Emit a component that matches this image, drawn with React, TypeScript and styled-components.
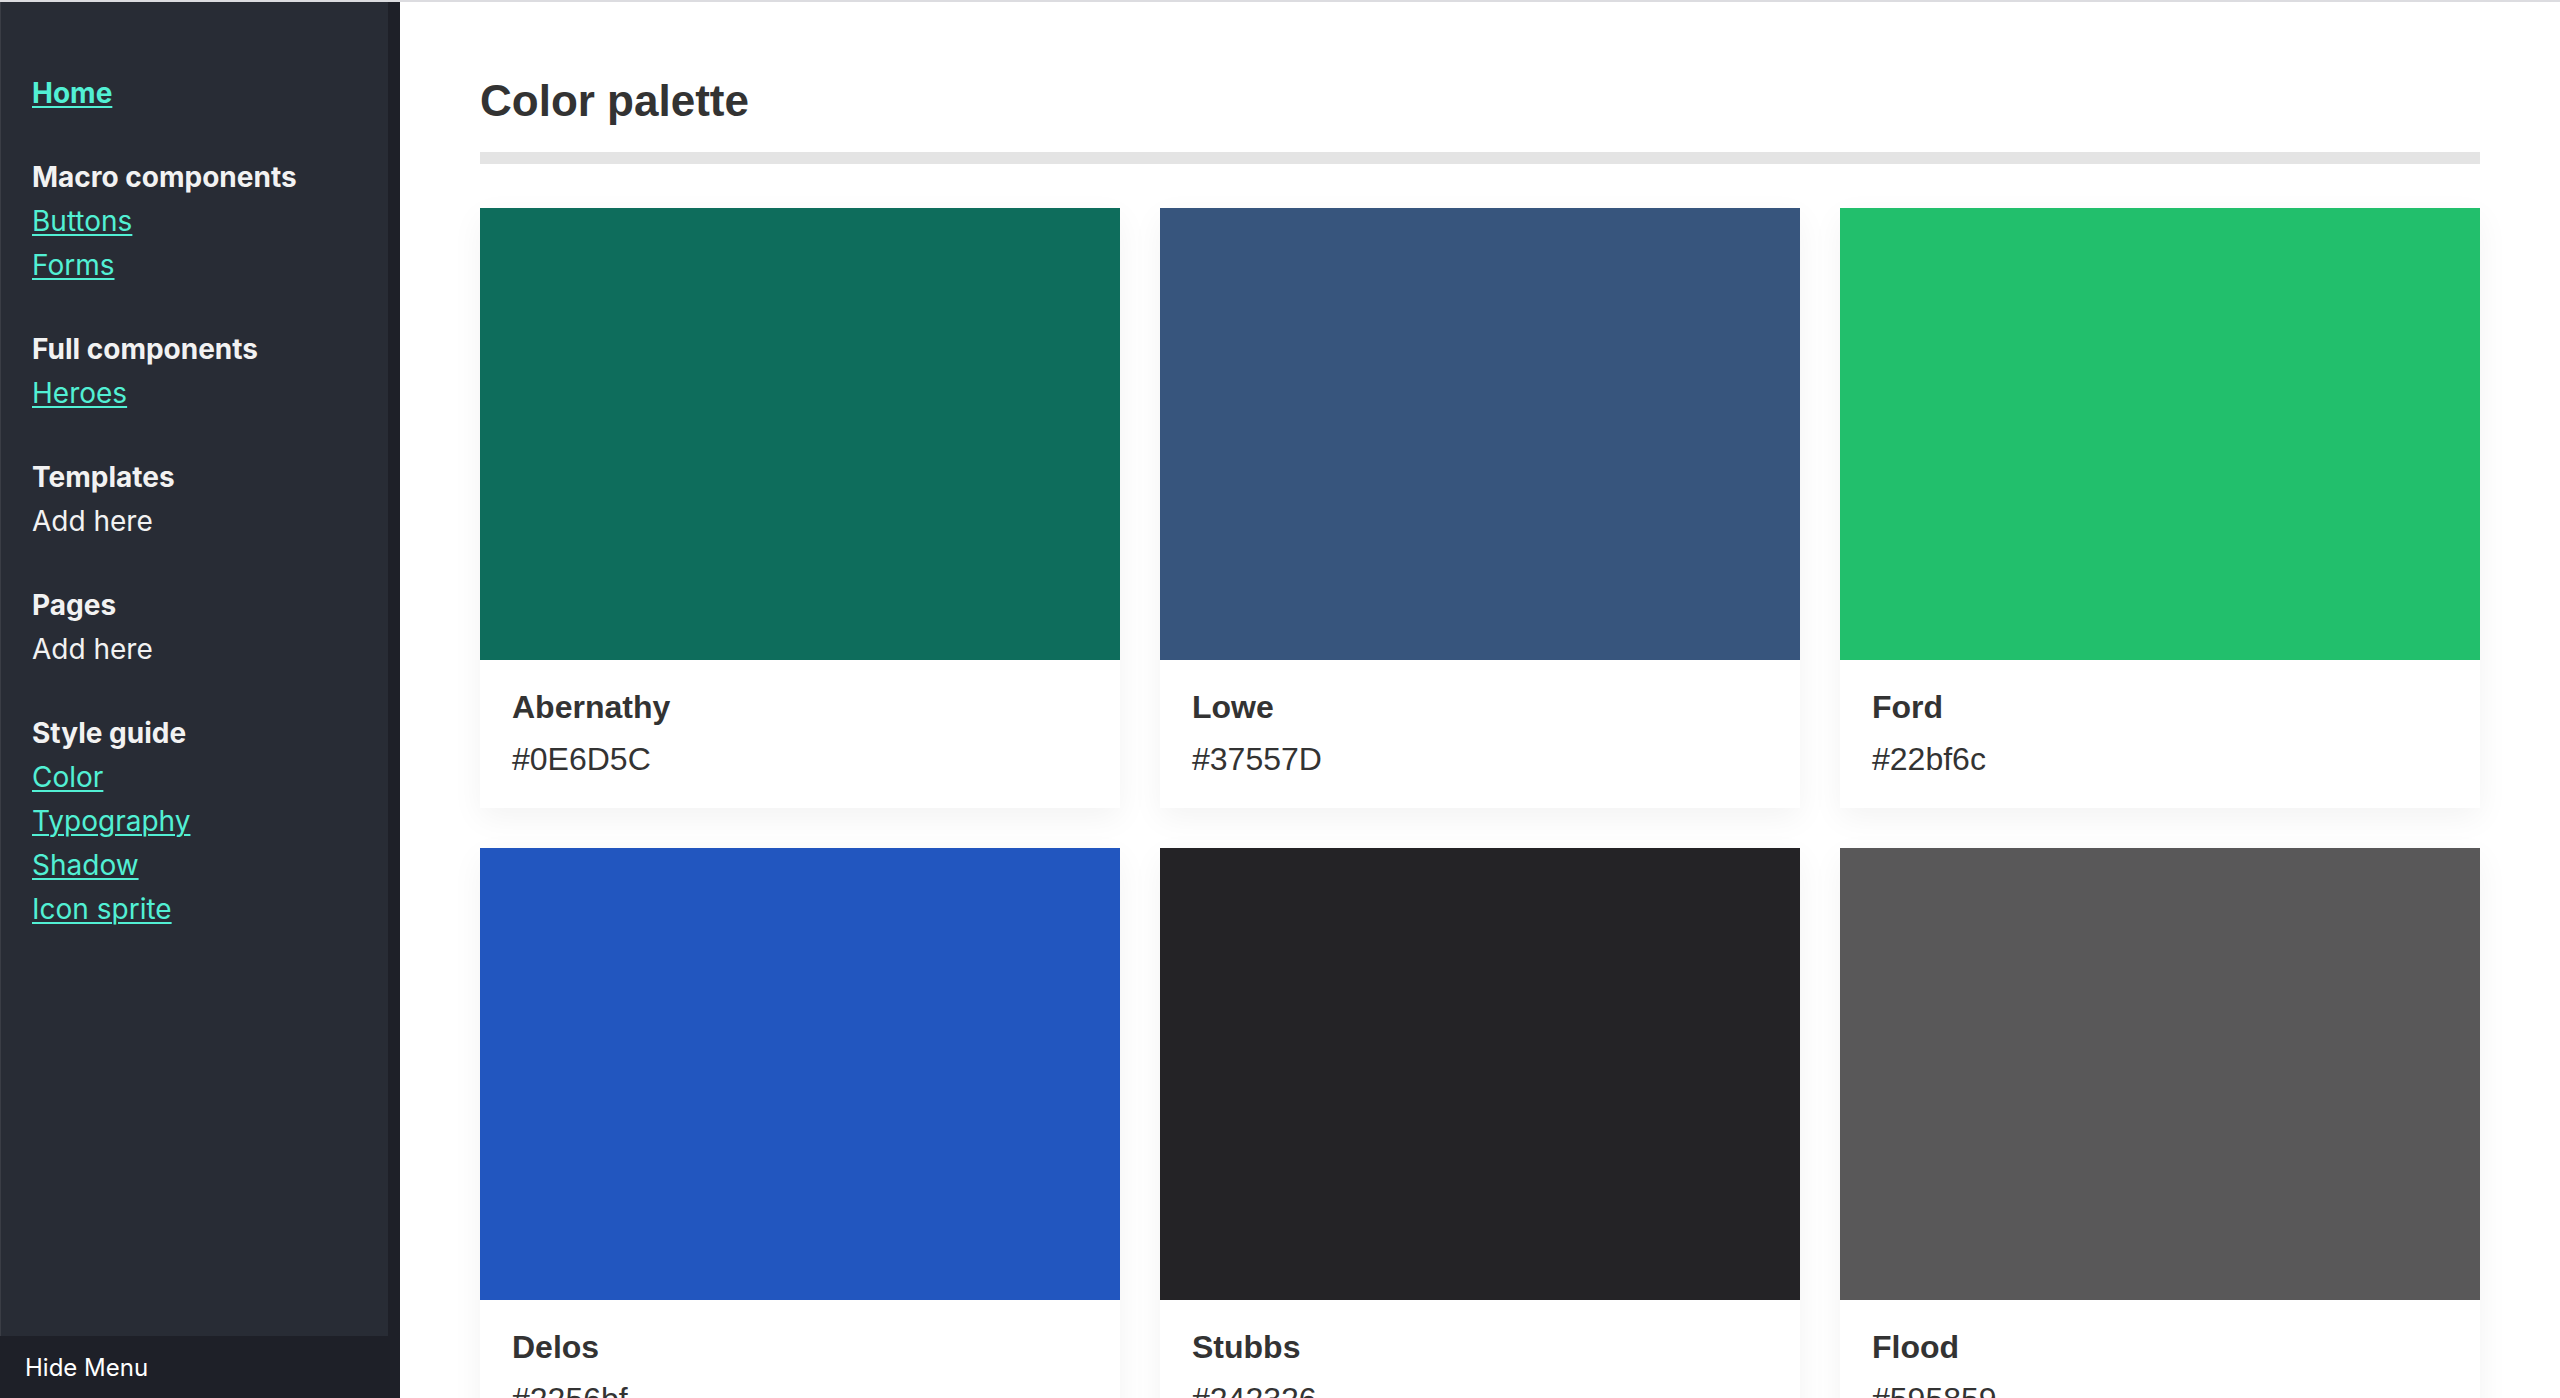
import styled, { createGlobalStyle } from 'styled-components'

const GlobalStyle = createGlobalStyle`
  html, body {
    margin: 0;
    padding: 0;
    background: #ffffff;
  }
  * {
    box-sizing: border-box;
  }
`

interface Swatch {
  name: string
  hex: string
}

const swatches: Swatch[] = [
  { name: 'Abernathy', hex: '#0E6D5C' },
  { name: 'Lowe', hex: '#37557D' },
  { name: 'Ford', hex: '#22bf6c' },
  { name: 'Delos', hex: '#2256bf' },
  { name: 'Stubbs', hex: '#242326' },
  { name: 'Flood', hex: '#595859' },
]

interface NavSection {
  title?: string
  links: { label: string; active?: boolean; placeholder?: boolean }[]
}

const sections: NavSection[] = [
  { links: [{ label: 'Home', active: true }] },
  {
    title: 'Macro components',
    links: [{ label: 'Buttons' }, { label: 'Forms' }],
  },
  { title: 'Full components', links: [{ label: 'Heroes' }] },
  { title: 'Templates', links: [{ label: 'Add here', placeholder: true }] },
  { title: 'Pages', links: [{ label: 'Add here', placeholder: true }] },
  {
    title: 'Style guide',
    links: [
      { label: 'Color' },
      { label: 'Typography' },
      { label: 'Shadow' },
      { label: 'Icon sprite' },
    ],
  },
]

export default function App() {
  return (
    <>
      <GlobalStyle />
      <Layout>
        <Sidebar>
          <Nav>
            {sections.map((section, i) => (
              <Section key={i}>
                {section.title && <SectionTitle>{section.title}</SectionTitle>}
                {section.links.map((link) =>
                  link.placeholder ? (
                    <Placeholder key={link.label}>{link.label}</Placeholder>
                  ) : (
                    <NavLink key={link.label} href="#" $active={link.active}>
                      {link.label}
                    </NavLink>
                  )
                )}
              </Section>
            ))}
          </Nav>
          <HideMenu>Hide Menu</HideMenu>
        </Sidebar>
        <Main>
          <Title>Color palette</Title>
          <Rule />
          <Grid>
            {swatches.map((swatch) => (
              <Card key={swatch.name}>
                <ColorBlock $color={swatch.hex} />
                <CardBody>
                  <SwatchName>{swatch.name}</SwatchName>
                  <SwatchHex>{swatch.hex}</SwatchHex>
                </CardBody>
              </Card>
            ))}
          </Grid>
        </Main>
      </Layout>
    </>
  )
}

const Layout = styled.div`
  display: grid;
  grid-template-columns: 400px 1fr;
  height: 100vh;
  overflow: hidden;
  border-top: 2px solid #dcdce0;
`

const Sidebar = styled.aside`
  display: flex;
  flex-direction: column;
  min-height: 0;
  background: #1e2028;
  font-family: Inter, 'Noto Sans', sans-serif;
`

const Nav = styled.nav`
  flex: 1;
  background: #282c35;
  border-left: 1px solid #3a3d45;
  margin-right: 12px;
  padding: 69px 0 0 31px;
`

const Section = styled.div`
  display: flex;
  flex-direction: column;
  align-items: flex-start;
  margin-bottom: 40px;
`

const SectionTitle = styled.div`
  font-size: 28px;
  line-height: 44px;
  font-weight: 700;
  color: #f2f2f2;
`

const NavLink = styled.a<{ $active?: boolean }>`
  font-size: 28px;
  line-height: 44px;
  font-weight: ${({ $active }) => ($active ? 700 : 400)};
  color: #52f0d4;
  text-decoration: underline;
  text-underline-offset: 3px;
  text-decoration-thickness: 2px;
`

const Placeholder = styled.div`
  font-size: 28px;
  line-height: 44px;
  color: #f2f2f2;
`

const HideMenu = styled.div`
  height: 62px;
  display: flex;
  align-items: center;
  padding-left: 25px;
  font-size: 24px;
  color: #ffffff;
  background: #1e2028;
`

const Main = styled.main`
  min-width: 0;
  overflow: hidden;
  padding: 73px 80px 0;
  font-family: 'Liberation Sans', Arial, sans-serif;
  color: #333333;
`

const Title = styled.h1`
  margin: 0;
  font-size: 44px;
  line-height: 52px;
  font-weight: 700;
  color: #333333;
`

const Rule = styled.div`
  height: 12px;
  margin-top: 25px;
  background: #e4e4e4;
`

const Grid = styled.div`
  display: grid;
  grid-template-columns: repeat(3, 1fr);
  gap: 40px;
  margin-top: 44px;
`

const Card = styled.div`
  background: #ffffff;
  box-shadow: 0 10px 30px rgba(0, 0, 0, 0.05);
`

const ColorBlock = styled.div<{ $color: string }>`
  height: 452px;
  background: ${({ $color }) => $color};
`

const CardBody = styled.div`
  display: flex;
  flex-direction: column;
  gap: 4px;
  padding: 23px 32px 25px;
`

const SwatchName = styled.div`
  font-size: 32px;
  line-height: 48px;
  font-weight: 700;
`

const SwatchHex = styled.div`
  font-size: 32px;
  line-height: 48px;
`
